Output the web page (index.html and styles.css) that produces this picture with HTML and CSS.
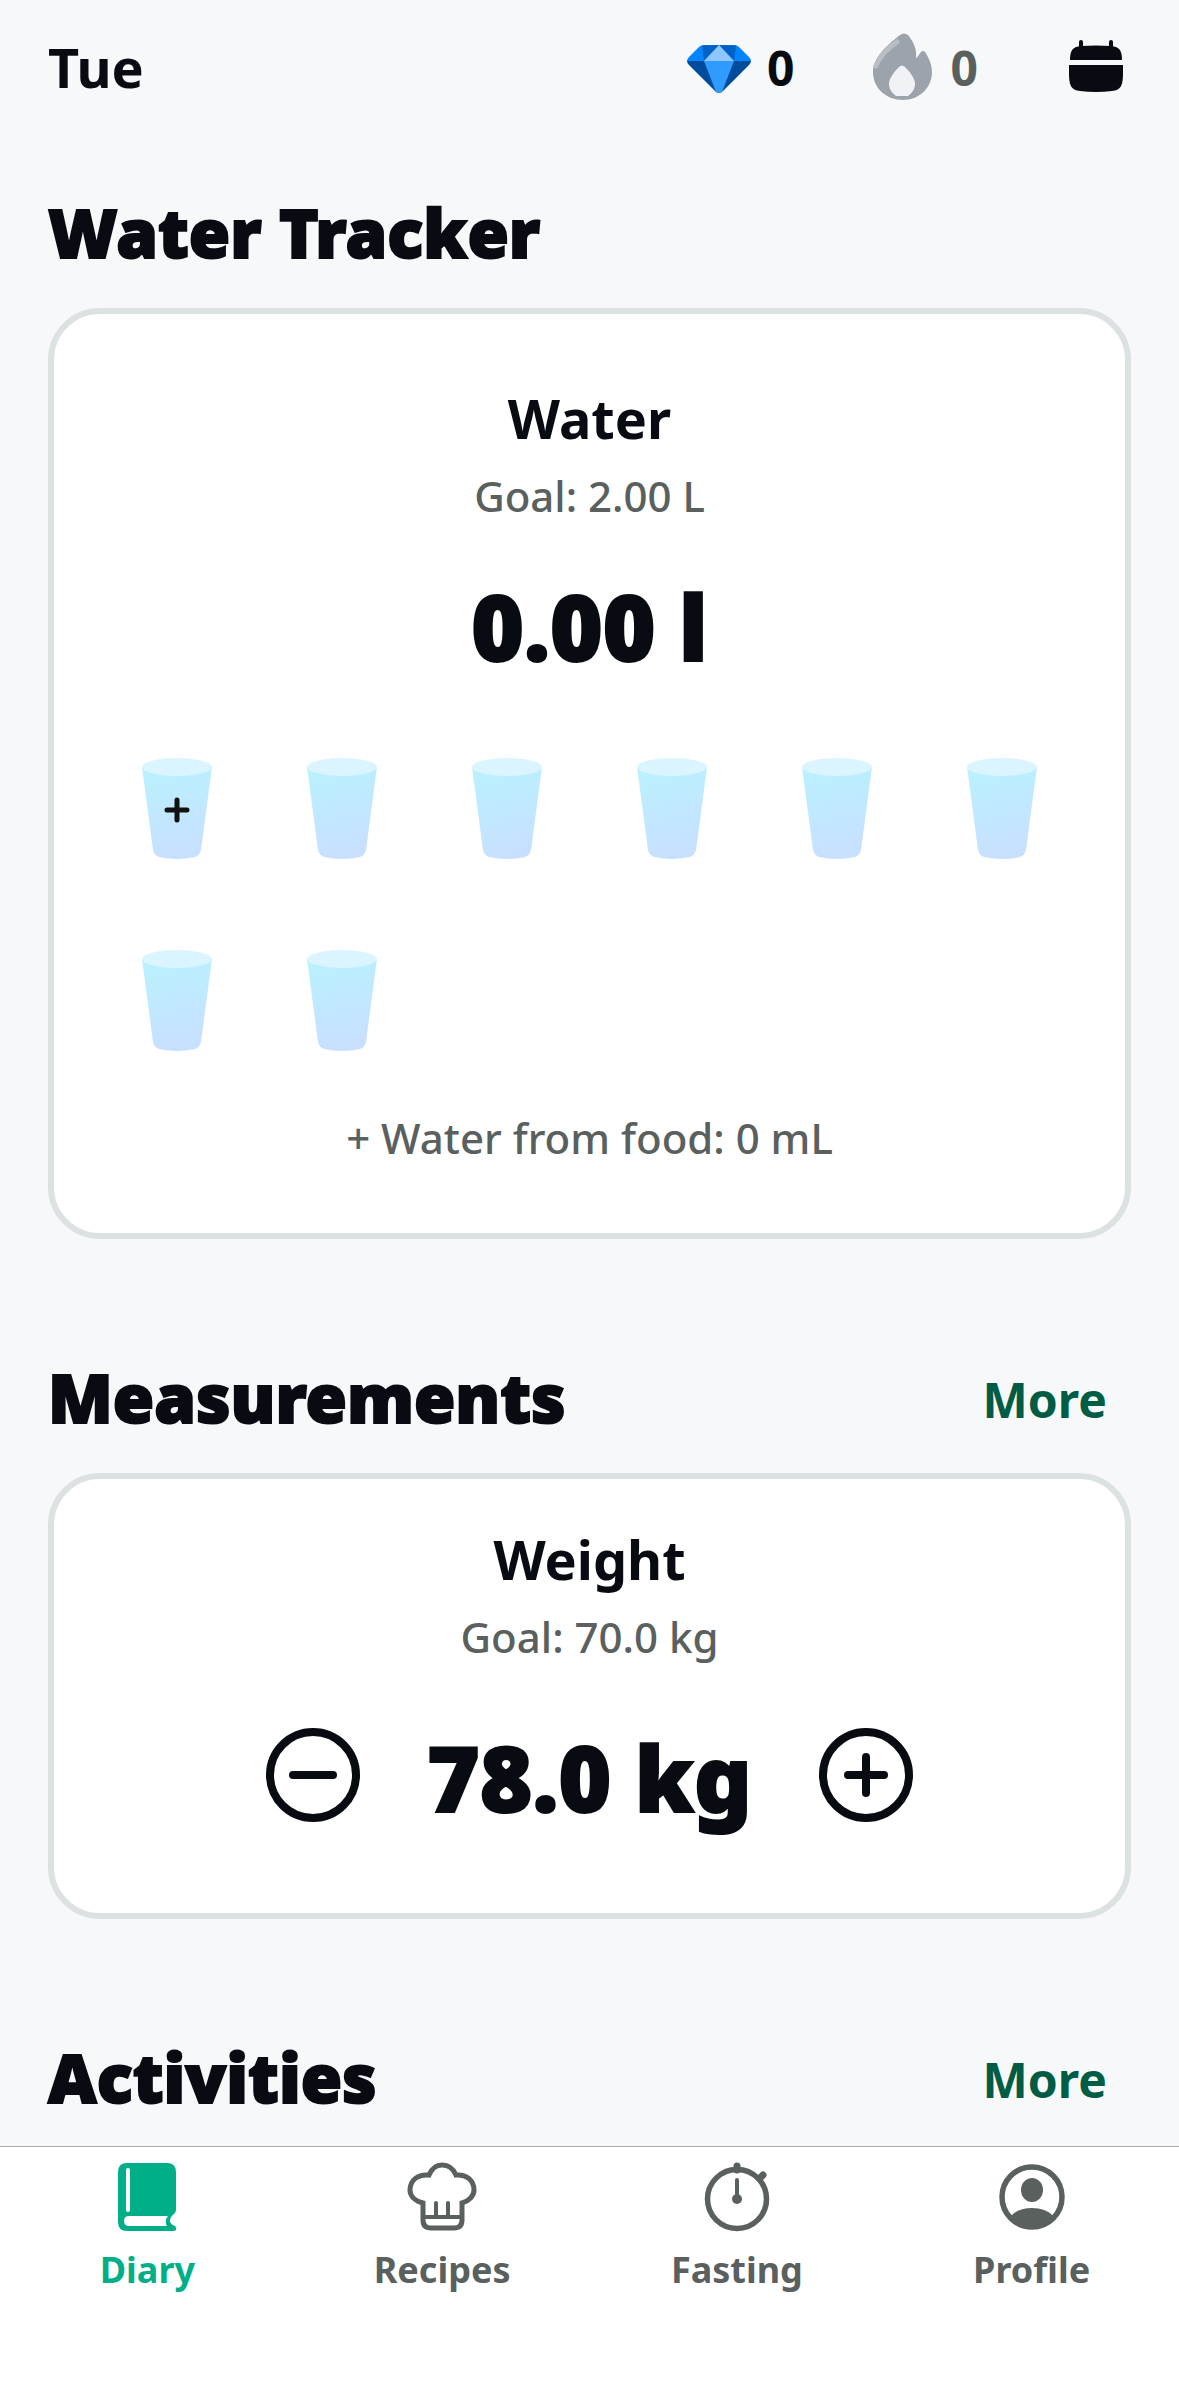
FILE: index.html
```html
<!DOCTYPE html>
<html lang="en">
<head>
<meta charset="UTF-8" />
<meta name="viewport" content="width=device-width, initial-scale=1" />
<title>Diary</title>
<link rel="stylesheet" href="styles.css">
</head>
<body>
<!-- shared shapes -->
<svg class="defs" width="0" height="0" aria-hidden="true">
  <defs>
    <linearGradient id="water" x1="0" y1="0" x2="0.2" y2="1">
      <stop offset="0.1" stop-color="#baf0ff" />
      <stop offset="1" stop-color="#c7e0ff" />
    </linearGradient>
    <symbol id="cup" viewBox="0 0 70 102">
      <path d="M0 9 L11 92 Q12 97 17 99 Q35 103 53 99 Q58 97 59 92 L70 9 Z" fill="url(#water)" />
      <ellipse cx="35" cy="9" rx="35" ry="9" fill="#daf5ff" />
    </symbol>
  </defs>
</svg>

<header class="topbar">
  <span class="day">Tue</span>
  <div class="stat">
    <svg class="icon" viewBox="0 0 68 68" aria-hidden="true">
      <path d="M2 28 Q2 26 4 24 L14 14 Q16 12 19 12 H49 Q52 12 54 14 L64 24 Q66 26 66 28 Z" fill="#0084ff" />
      <path d="M17 12.500 L34 12 L19 28 Z M51 12.500 L34 12 L49 28 Z" fill="#0062c4" />
      <path d="M34 12 L49 28 H19 Z" fill="#8fc6ff" />
      <path d="M2 28 H66 Q66 30 64 32 L38 58 Q34 62 30 58 L4 32 Q2 30 2 28 Z" fill="#004c9c" />
      <path d="M19 28 H49 L37 59 Q34 61 31 59 Z" fill="#2f9bff" />
    </svg>
    <span>0</span>
  </div>
  <div class="stat stat-off">
    <svg class="icon" viewBox="0 0 68 68" aria-hidden="true">
      <path d="M31 2 Q35 -1 39 2 C45 9 48 17 47 25 C49 24 50 21 52 19 Q54 17 56 19 C60 25 63 32 63 39 C63 55 50 67 34 67 C17 67 4 55 4 39 C4 25 17 13 31 2 Z" fill="#9ca3ab" />
      <path d="M7 33 C10 24 18 16 28 9" fill="none" stroke="#b9bec4" stroke-width="5" stroke-linecap="round" />
      <path d="M30 34 Q33 31 36 34 C42 40 46 46 46 51 C46 56 43 60 39 63 H27 C23 60 20 56 20 51 C20 46 24 40 30 34 Z" fill="#f0f2f6" />
    </svg>
    <span>0</span>
  </div>
  <button class="calendar-btn" type="button" aria-label="Calendar">
    <svg class="icon" viewBox="0 0 68 68" aria-hidden="true">
      <path d="M19 9 V17 M49 9 V17" stroke="#080b12" stroke-width="4" stroke-linecap="round" />
      <path d="M8 27 C8 18 10 14 19 13 Q34 12 49 13 C58 14 60 18 60 27 Z" fill="#080b12" />
      <path d="M7 32 H61 V40 C61 54 58 57 50 58 Q34 60 18 58 C10 57 7 54 7 40 Z" fill="#080b12" />
    </svg>
  </button>
</header>

<main>
  <section>
    <div class="section-head">
      <h2>Water Tracker</h2>
    </div>
    <div class="card card-water">
      <h3>Water</h3>
      <p class="goal">Goal: 2.00 L</p>
      <p class="value">0.00 l</p>
      <div class="cups">
        <button type="button" aria-label="Add glass 1">
          <svg viewBox="0 0 70 102">
            <use href="#cup" />
            <path d="M35 42 V62 M25 52 H45" stroke="#111" stroke-width="5" stroke-linecap="round" />
          </svg>
        </button>
        <button type="button" aria-label="Glass 2"><svg viewBox="0 0 70 102"><use href="#cup" /></svg></button>
        <button type="button" aria-label="Glass 3"><svg viewBox="0 0 70 102"><use href="#cup" /></svg></button>
        <button type="button" aria-label="Glass 4"><svg viewBox="0 0 70 102"><use href="#cup" /></svg></button>
        <button type="button" aria-label="Glass 5"><svg viewBox="0 0 70 102"><use href="#cup" /></svg></button>
        <button type="button" aria-label="Glass 6"><svg viewBox="0 0 70 102"><use href="#cup" /></svg></button>
        <button type="button" aria-label="Glass 7"><svg viewBox="0 0 70 102"><use href="#cup" /></svg></button>
        <button type="button" aria-label="Glass 8"><svg viewBox="0 0 70 102"><use href="#cup" /></svg></button>
      </div>
      <p class="food">+ Water from food: 0 mL</p>
    </div>
  </section>

  <section>
    <div class="section-head">
      <h2>Measurements</h2>
      <a class="more" href="#measurements">More</a>
    </div>
    <div class="card card-weight">
      <h3>Weight</h3>
      <p class="goal">Goal: 70.0 kg</p>
      <div class="stepper">
        <button type="button" aria-label="Decrease weight">
          <svg viewBox="0 0 96 96">
            <circle cx="48" cy="48" r="43" />
            <path d="M28 48 H68" />
          </svg>
        </button>
        <p class="value">78.0 kg</p>
        <button type="button" aria-label="Increase weight">
          <svg viewBox="0 0 96 96">
            <circle cx="48" cy="48" r="43" />
            <path d="M30 48 H66 M48 30 V66" />
          </svg>
        </button>
      </div>
    </div>
  </section>

  <section>
    <div class="section-head">
      <h2>Activities</h2>
      <a class="more" href="#activities">More</a>
    </div>
  </section>
</main>

<nav class="tabs">
  <a class="active" href="#diary">
    <svg class="icon" viewBox="0 0 68 68" aria-hidden="true">
      <path fill-rule="evenodd" fill="currentColor" d="M14 0 H54 Q63 0 63 9 V47 Q63 49 61 51 Q57 54 57 58 Q57 61 62 63 Q64 65 63 67 Q62 68 60 68 H14 Q5 68 5 59 V9 Q5 0 14 0 Z M16 53 Q11 53 11 58 Q11 63 16 63 H54 Q51 58 55 53 Z" />
      <path d="M15 7 V47" stroke="#fff" stroke-width="4" stroke-linecap="round" />
    </svg>
    <span>Diary</span>
  </a>
  <a href="#recipes">
    <svg class="icon" viewBox="0 0 68 68" aria-hidden="true">
      <g fill="none" stroke="currentColor" stroke-width="5">
        <path d="M15 57 V40 C7 38 2 33 2 27 C2 17 10 11 21 12 C24 5 28 2 34 2 C40 2 45 5 48 12 C58 11 66 17 66 27 C66 33 61 38 54 40 V57 Q54 65 46 65 H23 Q15 65 15 57 Z" />
        <path d="M15 54 H54" stroke-width="4" />
        <path d="M28 54 V40 M40 54 V40" stroke-width="4" stroke-linecap="round" />
      </g>
    </svg>
    <span>Recipes</span>
  </a>
  <a href="#fasting">
    <svg class="icon" viewBox="0 0 68 68" aria-hidden="true">
      <g fill="none" stroke="currentColor" stroke-linecap="round">
        <circle cx="34" cy="36" r="29.500" stroke-width="5.500" />
        <path d="M34 3 V7 M60 12 L57 15" stroke-width="7" />
        <path d="M34 17 V36" stroke-width="4" />
      </g>
      <circle cx="34" cy="36" r="5" fill="currentColor" />
    </svg>
    <span>Fasting</span>
  </a>
  <a href="#profile">
    <svg class="icon" viewBox="0 0 68 68" aria-hidden="true">
      <circle cx="34" cy="34" r="30" fill="none" stroke="currentColor" stroke-width="5.500" />
      <ellipse cx="34" cy="27" rx="11" ry="12" fill="currentColor" />
      <path d="M13 53 Q20 45 34 45 Q48 45 55 53 Q46 65 34 65 Q22 65 13 53 Z" fill="currentColor" />
    </svg>
    <span>Profile</span>
  </a>
</nav>
</body>
</html>
```

FILE: styles.css
```css
* {
  box-sizing: border-box;
}
body {
  margin: 0;
  min-height: 100vh;
  display: flex;
  flex-direction: column;
  font-family: "Noto Sans", "Open Sans", sans-serif;
  background: #f6f8fa;
  color: #080b12;
}
h2, h3, p {
  margin: 0;
}
button {
  padding: 0;
  border: none;
  background: none;
  color: inherit;
  cursor: pointer;
}
a {
  text-decoration: none;
}
svg {
  display: block;
}
.defs {
  position: absolute;
}
.icon {
  width: 68px;
  height: 68px;
  flex: none;
  overflow: visible;
}

/* top bar */
.topbar {
  display: flex;
  align-items: center;
  gap: 74px;
  height: 134px;
  padding: 0 39px 0 48px;
}
.day {
  margin-right: auto;
  font-size: 54px;
  font-weight: 700;
}
.stat {
  display: flex;
  align-items: center;
  gap: 14px;
  font-size: 48px;
  font-weight: 700;
}
.stat-off {
  color: #5a605e;
}
.calendar-btn {
  width: 88px;
  display: flex;
  justify-content: center;
}

/* sections */
main {
  flex: 1;
  padding: 40px 48px 0;
}
.section-head {
  display: flex;
  align-items: center;
  justify-content: space-between;
  height: 120px;
  padding-right: 24px;
}
.section-head h2 {
  font-size: 67px;
  font-weight: 900;
  line-height: 80px;
  padding-bottom: 4px;
  -webkit-text-stroke: 2px currentColor;
}
.more {
  color: #005c43;
  font-size: 48px;
  font-weight: 700;
}
.card {
  margin: 14px 0 100px;
  background: #fff;
  border: 6px solid #dce1e2;
  border-radius: 52px;
  text-align: center;
}
.card h3 {
  font-size: 54px;
  font-weight: 700;
  line-height: 72px;
}
.goal,
.food {
  color: #5a605e;
  font-size: 42px;
  font-weight: 500;
  line-height: 60px;
}
.goal {
  margin-top: 12px;
}
.value {
  padding-top: 4px;
  font-size: 90px;
  font-weight: 900;
  line-height: 120px;
  -webkit-text-stroke: 2px currentColor;
}

/* water */
.card-water {
  padding: 68px 40px 65px;
}
.card-water .value {
  margin-top: 36px;
}
.cups {
  display: grid;
  grid-template-columns: repeat(6, 1fr);
  justify-items: center;
  row-gap: 90px;
  margin: 72px 0 56px;
}
.cups svg {
  width: 70px;
  height: 102px;
}

/* weight */
.card-weight {
  padding: 44px 40px 76px;
}
.stepper {
  display: flex;
  align-items: center;
  justify-content: center;
  gap: 66px;
  margin-top: 46px;
}
.stepper svg {
  width: 96px;
  height: 96px;
  fill: none;
  stroke: currentColor;
  stroke-width: 8;
  stroke-linecap: round;
}

/* bottom tabs */
.tabs {
  display: grid;
  grid-template-columns: repeat(4, 1fr);
  padding: 16px 0 101px;
  background: #fff;
  border-top: 1px solid #a6adaa;
}
.tabs a {
  display: flex;
  flex-direction: column;
  align-items: center;
  gap: 14px;
  color: #5a605e;
  font-size: 36px;
  font-weight: 700;
  line-height: 50px;
}
.tabs .active {
  color: #00af87;
}
```
